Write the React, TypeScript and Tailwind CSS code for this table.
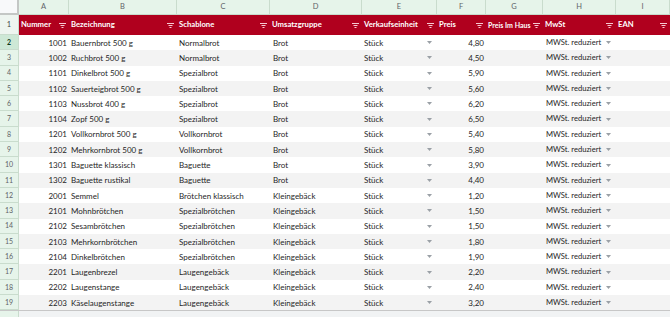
import React from "react";

const COLS = [50, 108, 93, 92, 75, 49, 57, 73, 54];
const LETTERS = ["A", "B", "C", "D", "E", "F", "G", "H", "I"];
const HEAD = ["Nummer", "Bezeichnung", "Schablone", "Umsatzgruppe", "Verkaufseinheit", "Preis", "Preis Im Haus", "MwSt", "EAN"];

const DATA: [string, string, string, string, string][] = [
  ["1001", "Bauernbrot 500 g", "Normalbrot", "Brot", "4,80"],
  ["1002", "Ruchbrot 500 g", "Normalbrot", "Brot", "4,50"],
  ["1101", "Dinkelbrot 500 g", "Spezialbrot", "Brot", "5,90"],
  ["1102", "Sauerteigbrot 500 g", "Spezialbrot", "Brot", "5,60"],
  ["1103", "Nussbrot 400 g", "Spezialbrot", "Brot", "6,20"],
  ["1104", "Zopf 500 g", "Spezialbrot", "Brot", "6,50"],
  ["1201", "Vollkornbrot 500 g", "Vollkornbrot", "Brot", "5,40"],
  ["1202", "Mehrkornbrot 500 g", "Vollkornbrot", "Brot", "5,80"],
  ["1301", "Baguette klassisch", "Baguette", "Brot", "3,90"],
  ["1302", "Baguette rustikal", "Baguette", "Brot", "4,40"],
  ["2001", "Semmel", "Brötchen klassisch", "Kleingebäck", "1,20"],
  ["2101", "Mohnbrötchen", "Spezialbrötchen", "Kleingebäck", "1,50"],
  ["2102", "Sesambrötchen", "Spezialbrötchen", "Kleingebäck", "1,50"],
  ["2103", "Mehrkornbrötchen", "Spezialbrötchen", "Kleingebäck", "1,80"],
  ["2104", "Dinkelbrötchen", "Spezialbrötchen", "Kleingebäck", "1,90"],
  ["2201", "Laugenbrezel", "Laugengebäck", "Kleingebäck", "2,20"],
  ["2202", "Laugenstange", "Laugengebäck", "Kleingebäck", "2,40"],
  ["2203", "Käselaugenstange", "Laugengebäck", "Kleingebäck", "3,20"],
];

function FilterIcon() {
  return (
    <svg width="7" height="5" viewBox="0 0 7 5" className="shrink-0">
      <rect x="0" y="0" width="7" height="1" fill="#f6c9d1" />
      <rect x="1.5" y="2" width="4" height="1" fill="#f6c9d1" />
      <rect x="2.5" y="4" width="2" height="1" fill="#f6c9d1" />
    </svg>
  );
}

function Arrow() {
  return (
    <svg width="5" height="3" viewBox="0 0 5 3" className="shrink-0">
      <path d="M0 0 L5 0 L2.5 3 Z" fill="#9aa0a6" />
    </svg>
  );
}

export default function App() {
  const font = { fontFamily: "Lato, 'Open Sans', sans-serif" };
  return (
    <div className="w-[670px] h-[317px] overflow-hidden bg-white relative" style={font}>
      <div className="flex h-[15px]">
        <div className="w-[19px] shrink-0 bg-[#f8f9fa] border-r-2 border-b-2 border-[#c4c7c5]" />
        {COLS.map((w, i) => (
          <div
            key={i}
            style={{ width: w }}
            className="shrink-0 bg-[#e6f4ea] border-r border-b border-[#c9dccd] flex items-center justify-center text-[7.5px] text-[#5f6368]"
          >
            {LETTERS[i]}
          </div>
        ))}
      </div>
      <div className="flex h-[20px]">
        <div className="w-[19px] shrink-0 bg-[#eef5f0] border-r border-b border-[#c9dccd] flex items-center justify-center text-[7.5px] text-[#444746]">
          1
        </div>
        {COLS.map((w, i) => (
          <div
            key={i}
            style={{ width: w }}
            className="shrink-0 bg-[#b0001e] flex items-center justify-between gap-[1px] pl-[2px] pr-[3px] font-bold text-white whitespace-nowrap"
          >
            <span className={i === 6 ? "text-[7px]" : "text-[7.7px]"}>{HEAD[i]}</span>
            <FilterIcon />
          </div>
        ))}
      </div>
      {DATA.map((r, idx) => {
        const rowNum = idx + 2;
        const band = idx % 2 === 1 ? "bg-[#f3f3f3]" : "bg-white";
        const sel = rowNum === 2;
        return (
          <div key={idx} className="flex h-[15.3px]">
            <div
              className={
                "w-[19px] shrink-0 border-r border-b border-[#c9dccd] flex items-center justify-center text-[7px] " +
                (sel ? "bg-[#cde8d6] text-[#0d3a1e] font-bold" : "bg-[#e6f4ea] text-[#5f6368]")
              }
            >
              {rowNum}
            </div>
            <div className={"flex text-[8px] text-[#1f1f1f] whitespace-nowrap " + band}>
              <div className="w-[50px] shrink-0 flex items-center justify-end pr-[2px]">{r[0]}</div>
              <div className="w-[108px] shrink-0 flex items-center pl-[2px]">{r[1]}</div>
              <div className="w-[93px] shrink-0 flex items-center pl-[2px]">{r[2]}</div>
              <div className="w-[92px] shrink-0 flex items-center pl-[3px]">{r[3]}</div>
              <div className="w-[75px] shrink-0 flex items-center justify-between pl-[2px] pr-[5px]">
                <span>Stück</span>
                <Arrow />
              </div>
              <div className="w-[49px] shrink-0 flex items-center justify-end pr-[2px]">{r[4]}</div>
              <div className="w-[57px] shrink-0" />
              <div className="w-[73px] shrink-0 flex items-center justify-between pl-[3px] pr-[5px]">
                <span className="text-[7.6px]">MWSt. reduziert</span>
                <Arrow />
              </div>
              <div className="w-[54px] shrink-0" />
            </div>
          </div>
        );
      })}
      <div className="flex h-[8px] border-t border-[#c7c7c7]">
        <div className="w-[19px] shrink-0 bg-[#e6f4ea] border-r border-[#c9dccd]" />
        <div className="flex-1 bg-[#f1f3f4]" />
      </div>
    </div>
  );
}
